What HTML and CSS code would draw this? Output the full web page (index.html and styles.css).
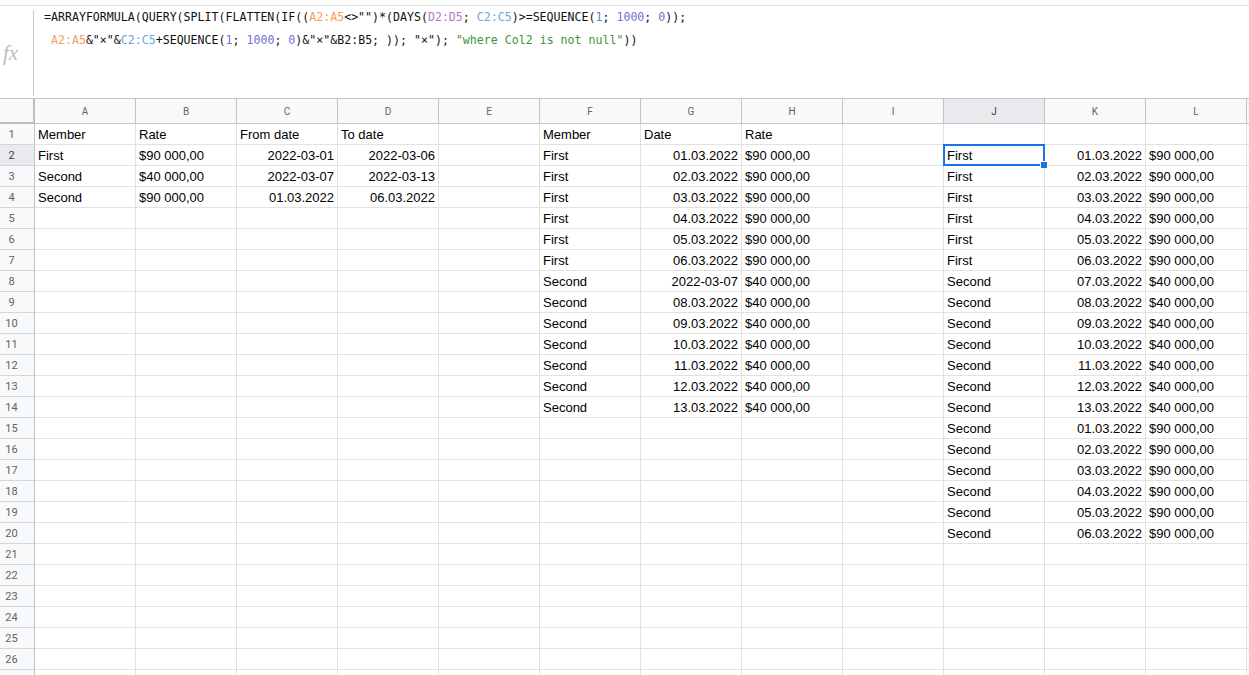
FILE: index.html
```html
<!DOCTYPE html>
<html lang="en">
<head>
    <meta charset="UTF-8">
    <meta name="viewport" content="width=device-width, initial-scale=1.0">
    <title>Sheet</title>
    <link rel="stylesheet" href="styles.css">
</head>
<body>

<div class="formula-bar">
    <div class="fx">fx</div>
    <div class="formula">
        <div class="formula-line">=ARRAYFORMULA(QUERY(SPLIT(FLATTEN(IF((<span class="ref-a">A2:A5</span>&lt;&gt;"")*(DAYS(<span class="ref-d">D2:D5</span>; <span class="ref-c">C2:C5</span>)&gt;=SEQUENCE(<span class="num">1</span>; <span class="num">1000</span>; <span class="num">0</span>));</div>
        <div class="formula-line"> <span class="ref-a">A2:A5</span>&amp;"×"&amp;<span class="ref-c">C2:C5</span>+SEQUENCE(<span class="num">1</span>; <span class="num">1000</span>; <span class="num">0</span>)&amp;"×"&amp;B2:B5; )); "×"); <span class="str">"where Col2 is not null"</span>))</div>
    </div>
</div>

<div class="sheet" id="sheet"></div>

<script>
    const sheet = document.getElementById('sheet');
    const cols = ['A', 'B', 'C', 'D', 'E', 'F', 'G', 'H', 'I', 'J', 'K', 'L', 'M'];
    const totalRows = 27;

    // Исходные данные
    const data = {
        1: { A: 'Member', B: 'Rate', C: 'From date', D: 'To date', F: 'Member', G: 'Date', H: 'Rate' },
        2: { A: 'First', B: '$90 000,00', C: '2022-03-01', D: '2022-03-06' },
        3: { A: 'Second', B: '$40 000,00', C: '2022-03-07', D: '2022-03-13' },
        4: { A: 'Second', B: '$90 000,00', C: '01.03.2022', D: '06.03.2022' }
    };

    const day = n => String(n).padStart(2, '0') + '.03.2022';
    const put = (row, col, value) => {
        data[row] = data[row] || {};
        data[row][col] = value;
    };

    // Результат формулы в F:H
    for (let i = 0; i < 13; i++) {
        const row = i + 2;
        const first = i < 6;
        put(row, 'F', first ? 'First' : 'Second');
        put(row, 'G', row === 8 ? '2022-03-07' : day(i + 1));
        put(row, 'H', first ? '$90 000,00' : '$40 000,00');
    }

    // Результат формулы в J:L
    for (let i = 0; i < 19; i++) {
        const row = i + 2;
        put(row, 'J', i < 6 ? 'First' : 'Second');
        put(row, 'K', day(i < 13 ? i + 1 : i - 12));
        put(row, 'L', i < 6 || i >= 13 ? '$90 000,00' : '$40 000,00');
    }

    const corner = document.createElement('div');
    corner.className = 'cell corner';
    sheet.appendChild(corner);

    cols.forEach(col => {
        const head = document.createElement('div');
        head.className = 'cell col-head' + (col === 'J' ? ' active' : '');
        head.textContent = col;
        sheet.appendChild(head);
    });

    for (let row = 1; row <= totalRows; row++) {
        const head = document.createElement('div');
        head.className = 'cell row-head' + (row === 2 ? ' active' : '');
        head.textContent = row;
        sheet.appendChild(head);

        cols.forEach(col => {
            const cell = document.createElement('div');
            const value = (data[row] || {})[col] || '';
            cell.className = 'cell';
            if (/^\d/.test(value)) {
                cell.classList.add('right');
            }
            cell.textContent = value;
            if (row === 2 && col === 'J') {
                cell.classList.add('selected');
                const handle = document.createElement('span');
                handle.className = 'handle';
                cell.appendChild(handle);
            }
            sheet.appendChild(cell);
        });
    }
</script>

</body>
</html>
```

FILE: styles.css
```css
* {
    box-sizing: border-box;
}
body {
    margin: 0;
    font-family: "Liberation Sans", Arial, sans-serif;
    background: #fff;
    overflow: hidden;
}
.formula-bar {
    display: flex;
    margin-top: 5px;
    height: 94px;
    border-top: 1px solid #e0e0e0;
    border-bottom: 1px solid #c4c4c4;
}
.fx {
    display: flex;
    align-items: center;
    flex-shrink: 0;
    width: 34px;
    margin: 4px 0 2px;
    padding-left: 3px;
    border-right: 1px solid #c8c8c8;
    font-family: "Liberation Serif", serif;
    font-style: italic;
    font-size: 21px;
    color: #bdbdbd;
}
.formula {
    padding-left: 10px;
    font-family: "DejaVu Sans Mono", "Liberation Mono", monospace;
    font-size: 11.6px;
    line-height: 23px;
    color: #111;
}
.formula-line {
    white-space: pre;
}
.ref-a { color: #f2a05c; }
.ref-c { color: #6ba6da; }
.ref-d { color: #b27cc6; }
.num { color: #6f74d6; }
.str { color: #3d9440; }

.sheet {
    display: grid;
    grid-template-columns: 35px repeat(13, 101px);
    grid-template-rows: 25px;
    grid-auto-rows: 21px;
    font-size: 13px;
    color: #000;
}
.cell {
    position: relative;
    padding: 1px 3px 0;
    line-height: 20px;
    white-space: nowrap;
    overflow: hidden;
    border-right: 1px solid #e2e2e2;
    border-bottom: 1px solid #e2e2e2;
}
.cell.right {
    text-align: right;
}
.corner {
    background: #f8f9fa;
    border-right: 2px solid #bdbdbd;
    border-bottom: 2px solid #bdbdbd;
}
.col-head {
    background: #f8f9fa;
    border-right-color: #c4c4c4;
    border-bottom-color: #c4c4c4;
    font-family: Roboto, "Liberation Sans", sans-serif;
    font-size: 10px;
    line-height: 24px;
    text-align: center;
    color: #5f6368;
}
.row-head {
    background: #f8f9fa;
    border-right-color: #c4c4c4;
    border-bottom-color: #d6d6d6;
    padding: 1px 11px 0 0;
    font-family: Roboto, "Liberation Sans", sans-serif;
    font-size: 11px;
    text-align: center;
    color: #5f6368;
}
.active {
    background: #e8eaed;
    color: #3c4043;
}
.selected {
    overflow: visible;
    z-index: 2;
}
.selected::after {
    content: "";
    position: absolute;
    top: -1px;
    left: -1px;
    right: -1px;
    bottom: -1px;
    border: 2px solid #1a73e8;
}
.handle {
    position: absolute;
    right: -3px;
    bottom: -3px;
    width: 6px;
    height: 6px;
    background: #1a73e8;
    box-shadow: 0 0 0 1px #fff;
    z-index: 3;
}
```
